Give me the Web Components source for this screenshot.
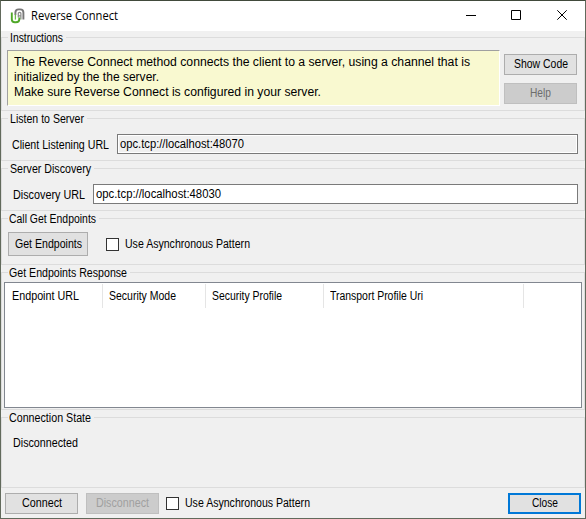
<!DOCTYPE html>
<html lang="en"><head><meta charset="utf-8"><title>Reverse Connect</title>
<style>html,body{margin:0;padding:0;overflow:hidden}body{font:12px "Liberation Sans",Arial,sans-serif;color:#000}</style></head>
<body><reverse-connect></reverse-connect>
<script>
const define=(name,css,html,ready)=>customElements.define(name,class extends HTMLElement{
  constructor(){super();this.attachShadow({mode:'open'}).innerHTML='<style>*{box-sizing:border-box}'+css+'</style>'+html;}
  connectedCallback(){if(ready)ready.call(this,this.shadowRoot);}
});

// A single line of text condensed or widened to the width given in "w".
define('fit-text',':host{display:block;flex:none;line-height:15px;height:15px;white-space:nowrap}span{display:inline-block;transform-origin:0 50%;white-space:pre}','<span><slot></slot></span>',function(r){
  const s=r.querySelector('span'),w=+this.getAttribute('w');
  this.style.width=w+'px';
  s.style.transform='scaleX('+w/s.getBoundingClientRect().width+')';
});

define('group-box',`:host{display:grid;grid-template-rows:15px 1fr;height:var(--h);flex:none}
.top{display:flex;align-items:center;height:15px}.top::before{content:"";width:7px;height:1px;background:#dcdcdc}.top::after{content:"";flex:1;height:1px;background:#dcdcdc}
.top fit-text{margin:2px 3px 0 var(--lx,2px)}
.in{border:solid #dcdcdc;border-width:0 1px 1px;margin-top:-7px;padding:var(--p);display:flex;align-items:flex-start}`,
'<div class="top"></div><div class="in"><slot></slot></div>',function(r){
  const n=document.createElement('fit-text');n.textContent=this.getAttribute('label');n.setAttribute('w',this.getAttribute('w'));
  r.querySelector('.top').append(n);
});

define('push-button',`:host{display:flex;flex:none;width:73px;height:21px;box-sizing:border-box;border:1px solid #adadad;background:#e1e1e1;align-items:center;justify-content:center}
:host([disabled]){background:#ccc;border-color:#bfbfbf;color:var(--dis,#a0a0a0)}:host([primary]){border:2px solid #0078d7}`,'<slot></slot>');

define('check-box',`:host{display:flex;flex:none;align-items:center;gap:6px}i{width:13px;height:13px;border:1px solid #333;background:#fff}`,'<i></i><slot></slot>');

define('text-field',`:host{display:flex;flex:none;height:20px;box-sizing:border-box;border:1px solid #7a7a7a;background:#fff;align-items:center;padding-left:2px}:host([readonly]){background:#f0f0f0;box-shadow:inset 0 0 0 1px #fff}`,'<slot></slot>');

define('app-logo',':host{display:block;width:16px;height:16px}svg{display:block}',`<svg width="16" height="16" viewBox="0 0 16 16" fill="none" stroke-width="1.9">
<path d="M5.4 7V4.4Q5.4 1.4 8.6 1.4H10.2Q13.4 1.4 13.4 4.4V11.6" stroke="#777"/><path d="M8.3 9.5V5.6Q8.3 4.3 9.6 4.3T10.9 5.6V11.5M8.3 7.8H11" stroke="#8a8a8a" stroke-width="1.2"/>
<path d="M1.8 4.6V11.2Q1.8 14.3 4.8 14.3H6Q9.3 14.3 9.3 11.2V9.5" stroke="#50a829"/><path d="M5.4 6.5V11.6" stroke="#6fba4b" stroke-width="1.3"/></svg>`);

define('title-bar',`:host{display:flex;flex:none;height:30px;background:#fff;align-items:center;padding-left:9px}
app-logo{margin-right:5px}fit-text{font:12px "Open Sans","Noto Sans",sans-serif;height:15px;line-height:15px;margin-bottom:2px}.sp{flex:1}svg{flex:none;display:block}`,
`<app-logo></app-logo><fit-text w="87">Reverse Connect</fit-text><div class="sp"></div>
<svg width="138" height="30" viewBox="447 1 138 30" fill="none" stroke="#000"><path d="M466 15.5H476M511.5 10.5H520.5V19.5H511.5ZM557.3 10.3L566.7 19.7M566.7 10.3L557.3 19.7"/></svg>`);

define('notice-panel',':host{display:block;flex:none;width:493px;height:56px;box-sizing:border-box;background:#f9f9d0;border:1px solid;border-color:#a0a0a0 #fff #fff #a0a0a0;padding:4px 0 0 6px}','<slot></slot>');

define('endpoint-table',`:host{display:flex;flex:none;width:578px;height:126px;box-sizing:border-box;border:1px solid #828790;background:#fff;padding-top:1px}
.c{height:24px;border-right:1px solid #e5e5e5;padding:5px 0 0 6px;flex:none}`,
`<div class="c" style="width:98px;padding-left:7px"><fit-text w="67">Endpoint URL</fit-text></div><div class="c" style="width:103px"><fit-text w="67">Security Mode</fit-text></div><div class="c" style="width:118px"><fit-text w="70">Security Profile</fit-text></div><div class="c" style="width:200px"><fit-text w="93">Transport Profile Uri</fit-text></div>`);

define('reverse-connect',`:host{display:flex;flex-direction:column;width:586px;height:519px;box-sizing:border-box;border:1px solid #626a5c;border-top-color:#414a3b;background:#f0f0f0}
title-bar{margin-bottom:-1px}
.side{display:flex;flex-direction:column;gap:8px;margin:4px 0 0 4px}.foot{display:flex;padding:5px 4px 0}.foot>*+*{margin-left:8px}.foot check-box{margin-left:7px}`,
`<title-bar></title-bar>
<group-box label="Instructions" w="53" style="--h:81px;--p:12px 0 0 5px"><notice-panel><fit-text w="456">The Reverse Connect method connects the client to a server, using a channel that is</fit-text><fit-text w="145">initialized by the the server.</fit-text><fit-text w="307">Make sure Reverse Connect is configured in your server.</fit-text></notice-panel>
<div class="side"><push-button><fit-text w="54">Show Code</fit-text></push-button><push-button disabled style="--dis:#6d6d6d"><fit-text w="21">Help</fit-text></push-button></div></group-box>
<group-box label="Listen to Server" w="74" style="--h:50px;--p:15px 0 0 10px"><fit-text w="97" style="margin-top:4px">Client Listening URL</fit-text><text-field readonly style="width:461px;margin-left:8px"><fit-text w="124">opc.tcp://localhost:48070</fit-text></text-field></group-box>
<group-box label="Server Discovery" w="81" style="--h:50px;--p:15px 0 0 11px"><fit-text w="72" style="margin-top:4px">Discovery URL</fit-text><text-field style="width:485px;margin-left:8px"><fit-text w="125">opc.tcp://localhost:48030</fit-text></text-field></group-box>
<group-box label="Call Get Endpoints" w="87" style="--h:54px;--lx:1px;--p:13px 0 0 6px"><push-button style="width:80px;height:24px"><fit-text w="67">Get Endpoints</fit-text></push-button><check-box style="margin:5px 0 0 18px"><fit-text w="125">Use Asynchronous Pattern</fit-text></check-box></group-box>
<group-box label="Get Endpoints Response" w="118" style="--h:145px;--lx:1px;--p:9px 0 0 2px"><endpoint-table></endpoint-table></group-box>
<group-box label="Connection State" w="82" style="--h:78px;--lx:1px;--p:17px 0 0 11px"><fit-text w="65" style="margin-top:1px">Disconnected</fit-text></group-box>
<div class="foot"><push-button><fit-text w="40">Connect</fit-text></push-button><push-button disabled><fit-text w="53">Disconnect</fit-text></push-button><check-box><fit-text w="125">Use Asynchronous Pattern</fit-text></check-box><push-button primary style="margin-left:auto"><fit-text w="26">Close</fit-text></push-button></div>`);
</script></body></html>
